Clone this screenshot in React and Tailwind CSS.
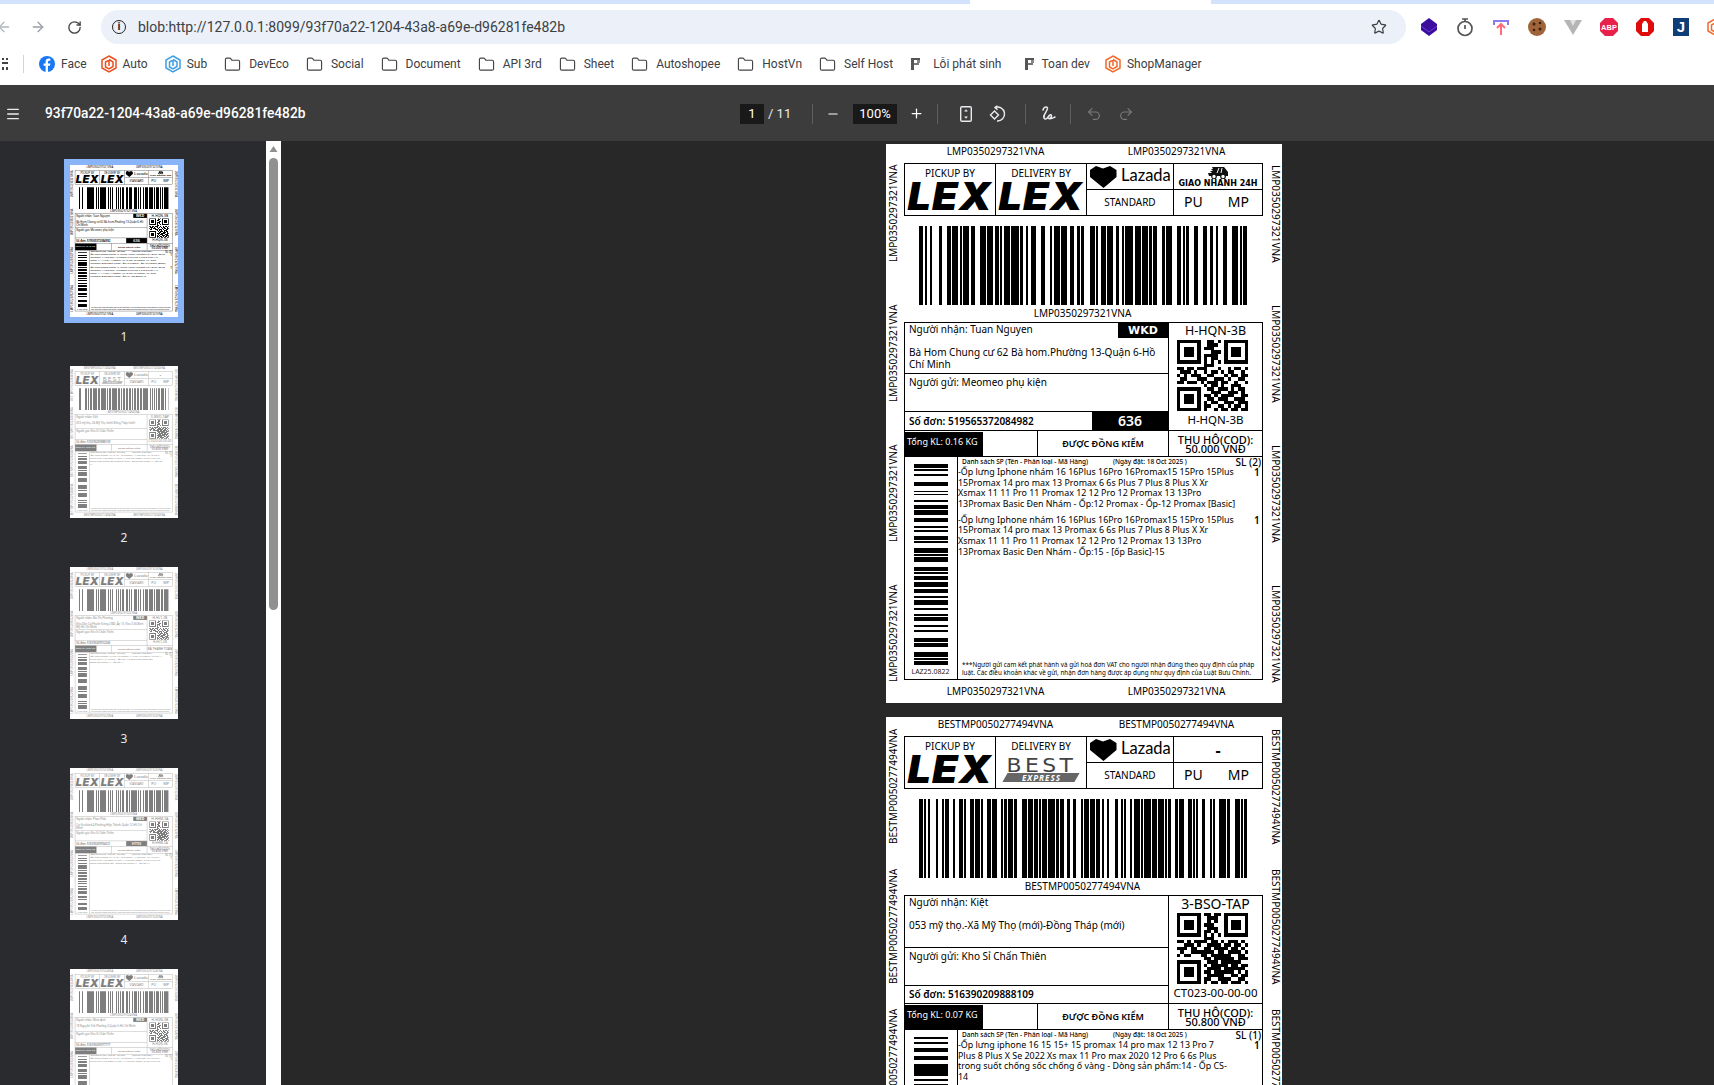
import { ArrowLeft, ArrowRight, RotateCw, Folder, Star, Menu, Minus, Plus, Undo2, Redo2 } from "lucide-react";

const CODE128 = "212222,222122,222221,121223,121322,131222,122213,122312,132212,221213,221312,231212,112232,122132,122231,113222,123122,123221,223211,221132,221231,213212,223112,312131,311222,321122,321221,312212,322112,322211,212123,212321,232121,111323,131123,131321,112313,132113,132311,211313,231113,231311,112133,112331,132131,113123,113321,133121,313121,211331,231131,213113,213311,213131,311123,311321,331121,312113,312311,332111,314111,221411,431111,111224,111422,121124,121421,141122,141221,112214,112412,122114,122411,142112,142211,241211,221114,413111,241112,134111,111242,121142,121241,114212,124112,124211,411212,421112,421211,212141,214121,412121,111143,111341,131141,114113,114311,411113,411311,113141,114131,311141,411131,211412,211214,211232,2331112".split(",");

// letters in set B, long digit runs packed in set C
function encode(value) {
  const codes = [];
  let inC = false;
  for (const run of value.match(/\d{4,}|\D+|\d+/g)) {
    if (/^\d{4,}$/.test(run) && run.length % 2 === 0) {
      codes.push(99);
      for (let i = 0; i < run.length; i += 2) codes.push(Number(run.slice(i, i + 2)));
      inC = true;
    } else {
      if (inC) codes.push(100);
      inC = false;
      for (const c of run) codes.push(c.charCodeAt(0) - 32);
    }
  }
  return codes;
}

function Barcode({ value }) {
  const codes = encode(value);
  const check = codes.reduce((sum, c, i) => sum + c * (i + 1), 104) % 103;
  const widths = [104, ...codes, check, 106].map((c) => CODE128[c]).join("");
  let x = 0;
  const bars = [];
  [...widths].forEach((w, i) => {
    if (i % 2 === 0) bars.push(<rect key={i} x={x} y="0" width={Number(w) + 0.3} height="10" />);
    x += Number(w);
  });
  return (
    <svg width="328" height="79" viewBox={`0 0 ${x} 10`} preserveAspectRatio="none" shapeRendering="crispEdges" fill="#000">
      {bars}
    </svg>
  );
}

const SIDE_A = [[15,27],[31,36],[45,51],[69,81],[96,100],[104,109],[123,129],[138,150],[153,167],[177,189],[201,206],[212,218],[231,243],[246,252],[267,282],[286,290],[294,308],[324,336],[340,345],[350,363],[370,384],[390,402],[411,416],[423,438],[447,453],[465,470],[474,486],[498,504],[513,519],[537,549],[553,565],[579,594],[597,602],[606,618]];
const SIDE_B = [[15,21],[30,36],[48,60],[72,84],[96,132],[141,147],[156,192],[201,207],[216,264],[273,279],[288,336],[348,354],[363,411],[423,429],[438,444],[453,501],[513,519],[528,540],[555,561],[570,618]];

function SideBars({ bars }) {
  return (
    <svg width="34" height="201" viewBox="0 15 102 603" shapeRendering="crispEdges" fill="#000">
      {bars.map(([a, b]) => <rect key={a} x="0" y={a} width="102" height={b - a} />)}
    </svg>
  );
}

const QR_A = ["111111100110101111111","100000100111001000001","101110101110001011101","101110100011101011101","101110101111001011101","100000101011001000001","111111101010101111111","000000001110000000000","110110111000100101101","011101001011010110010","101011100110001011011","011000111001110100110","110111010111011001001","000000001011010011100","111111100110111010110","100000100011100111010","101110101101011110011","101110100110111001110","101110101011001110111","100000101100110101101","111111101001011011011"];
const QR_B = ["111111101101101111111","100000100111001000001","101110100101001011101","101110101110001011101","101110100111001011101","100000101101001000001","111111101010101111111","000000001110000000000","110101111011010111010","001110100111101101101","111011001101111011010","010011111110110111101","101100011011111100110","000000001101111110111","111111100111011111100","100000101011111011011","101110100111101111110","101110101101111110101","101110100111110011011","100000101100111100110","111111101011011011101"];

function Qr({ rows }) {
  return (
    <svg width="71" height="71" viewBox="0 0 21 21" shapeRendering="crispEdges" fill="#000" className="mr-[6px] shrink-0">
      {rows.flatMap((row, y) => [...row].map((c, x) => (c === "1" ? <rect key={`${x}-${y}`} x={x} y={y} width="1" height="1" /> : null)))}
    </svg>
  );
}

function LexLogo() {
  return <div className="font-['Inter'] font-black italic text-[38px] leading-[27px] h-[27px] tracking-[1px] text-black scale-x-[1.09]">LEX</div>;
}

function BestLogo() {
  return (
    <div className="flex flex-col items-center mt-[2px]">
      <div className="font-['DejaVu_Sans'] text-[19px] leading-[14px] tracking-[3px] text-[#444] scale-x-[1.15]">BEST</div>
      <div className="mt-[1px] w-[72px] h-[9px] bg-[#666] -skew-x-[30deg] flex items-center justify-center">
        <span className="skew-x-[30deg] italic font-bold text-[8px] leading-[9px] tracking-[1px] text-white">EXPRESS</span>
      </div>
    </div>
  );
}

function LazadaMark() {
  return (
    <div className="flex items-center gap-[4px] pl-[3px] h-full">
      <svg width="27" height="24" viewBox="0 0 27 24" fill="#000">
        <path d="M0 5 L6 1 L13 3.5 L20 1 L26.5 5 L26.5 12 L13.5 23 L0 12 Z" />
      </svg>
      <span className="font-['Lato'] text-[16.5px] leading-none text-black -mt-[3px]">Lazada</span>
    </div>
  );
}

function TruckIcon() {
  return (
    <svg width="22" height="13" viewBox="0 0 22 13" fill="#111">
      <path d="M5 1 H17 L21 6 V10 H2 L1 7 H5 L3 5 H6 L4 3 H6 Z" />
      <circle cx="7" cy="10.5" r="2.3" fill="#fff" stroke="#111" strokeWidth="1.2" />
      <circle cx="16" cy="10.5" r="2.3" fill="#fff" stroke="#111" strokeWidth="1.2" />
      <path d="M12 2 L10 7 M15 2 L14 7" stroke="#fff" strokeWidth="1" />
    </svg>
  );
}

function SideColumn({ code, rotate }) {
  return (
    <div className={rotate ? "w-[18px] shrink-0 flex flex-col rotate-180 pl-[4px] -mt-[1px]" : "w-[19px] shrink-0 flex flex-col pl-[7px]"}>
      {[0, 1, 2, 3].map((i) => (
        <div key={i} className="h-[140px] shrink-0 flex items-center justify-center text-[10px] leading-[12px] text-black whitespace-nowrap [writing-mode:vertical-rl]">
          {code}
        </div>
      ))}
    </div>
  );
}

function CodeRow({ code, className }) {
  return (
    <div className={`flex pl-[1px] text-[10px] leading-[12px] text-black ${className}`}>
      <div className="w-[181px] shrink-0 text-center">{code}</div>
      <div className="w-[176px] shrink-0 pl-[5px] text-center whitespace-nowrap">{code}</div>
    </div>
  );
}

const NOTE = "***Người gửi cam kết phát hành và gửi hoá đơn VAT cho người nhận đúng theo quy định của pháp\nluật. Các điều khoản khác về gửi, nhận đơn hàng được áp dụng như quy định của Luật Bưu Chính.";

function Label({ p }) {
  return (
    <div className="w-[396px] h-[559px] shrink-0 bg-white flex overflow-hidden font-['Noto_Sans',sans-serif] text-black">
      <SideColumn code={p.code} rotate />
      <div className="w-[359px] shrink-0 flex flex-col">
        <CodeRow code={p.code} className="h-[19px] items-start pt-[1px]" />

        <div className="h-[53px] grid grid-cols-[91px_91px_87px_1fr] border border-black">
          <div className="border-r border-black flex flex-col items-center pt-[3px]">
            <div className="text-[10px] leading-[13px] mb-[3px]">PICKUP BY</div>
            <LexLogo />
          </div>
          <div className="border-r border-black flex flex-col items-center pt-[3px]">
            <div className="text-[10px] leading-[13px] mb-[3px]">DELIVERY BY</div>
            {p.delivery === "best" ? <BestLogo /> : <LexLogo />}
          </div>
          <div className="border-r border-black flex flex-col">
            <div className="h-[26px] border-b border-black"><LazadaMark /></div>
            <div className="flex-1 flex items-center justify-center text-[10px]">STANDARD</div>
          </div>
          <div className="flex flex-col">
            <div className="h-[26px] border-b border-black flex flex-col items-center justify-center">
              {p.fast ? (
                <>
                  <TruckIcon />
                  <div className="font-['DejaVu_Sans'] font-bold text-[8px] leading-[9px] whitespace-nowrap">GIAO NHANH 24H</div>
                </>
              ) : (
                <div className="font-bold text-[16px] leading-none">-</div>
              )}
            </div>
            <div className="flex-1 flex items-center justify-between pl-[10px] pr-[13px] pb-[1px] text-[14px] leading-none">
              <span>PU</span>
              <span>MP</span>
            </div>
          </div>
        </div>

        <div className="h-[106px] flex flex-col items-center pt-[10px] pr-[2px]">
          <Barcode value={p.code} />
          <div className="text-[10px] leading-[16px]">{p.code}</div>
        </div>

        <div className="h-[358px] flex flex-col border border-black">
          <div className="h-[108px] flex border-b border-black">
            <div className="w-[264px] flex flex-col border-r border-black">
              <div className="h-[52px] border-b border-black flex flex-col">
                <div className="flex h-[15px] items-start">
                  <div className="flex-1 pl-[4px] text-[10px] leading-[13px]">Người nhận: {p.name}</div>
                  {p.tag && <div className="w-[50px] h-[15px] bg-black text-white font-['DejaVu_Sans'] font-bold text-[11px] leading-[15px] text-center">{p.tag}</div>}
                </div>
                <div className="pl-[4px] pr-[8px] pt-[8px] text-[10px] leading-[12px]">{p.address}</div>
              </div>
              <div className="h-[38px] border-b border-black pl-[4px] pt-[1px] text-[10px] leading-[15px]">Người gửi: {p.sender}</div>
              <div className="flex-1 flex items-center">
                <div className="flex-1 pl-[4px] font-semibold text-[10px] leading-[17px]">Số đơn: {p.order}</div>
                {p.num && <div className="w-[76px] h-full bg-black text-white font-semibold text-[14px] leading-[18px] text-center">{p.num}</div>}
              </div>
            </div>
            <div className="flex-1 flex flex-col items-center">
              <div className={`h-[17px] leading-[16px] whitespace-nowrap ${p.wideSort ? "text-[14px]" : "text-[12.5px]"}`}>{p.sort}</div>
              <Qr rows={p.qr} />
              <div className="text-[11.5px] leading-[18px] whitespace-nowrap">{p.sort2}</div>
            </div>
          </div>

          <div className="h-[26px] flex border-b border-black">
            <div className="w-[133px] border-r border-black pt-[1px]">
              <div className="w-[78px] h-[24px] bg-black text-white text-[9px] leading-[19px] pl-[2px] whitespace-nowrap">Tổng KL: {p.weight} KG</div>
            </div>
            <div className="w-[131px] border-r border-black flex items-center justify-center font-semibold text-[9px] whitespace-nowrap">ĐƯỢC ĐỒNG KIỂM</div>
            <div className="flex-1 flex flex-col items-center justify-center font-medium text-[11px] leading-[9px] whitespace-nowrap">
              {p.cod ? (
                <>
                  <div>THU HỘ(COD):</div>
                  <div>{p.cod} VNĐ</div>
                </>
              ) : (
                <div>ĐÃ THANH TOÁN</div>
              )}
            </div>
          </div>

          <div className="flex-1 flex min-h-0">
            <div className="w-[53px] shrink-0 border-r border-black flex flex-col items-center pt-[7px] pr-[1px]">
              <SideBars bars={p.side} />
              <div className="text-[7px] leading-[13px] text-[#222]">LAZ25.0822</div>
            </div>
            <div className="flex-1 flex flex-col min-w-0 pb-[2px]">
              <div className="flex h-[10px] items-center pl-[4px] pr-[1px]">
                <span className="w-[151px] font-medium text-[6.5px] whitespace-nowrap">Danh sách SP (Tên - Phân loại - Mã Hàng)</span>
                <span className="flex-1 font-medium text-[6.5px] whitespace-nowrap">(Ngày đặt: 18 Oct 2025 )</span>
                <span className="font-medium text-[10px] whitespace-nowrap">SL ({p.items.length})</span>
              </div>
              {p.items.map((item, i) => (
                <div key={i} className={`flex text-[8.9px] leading-[10.67px] ${i > 0 ? "mt-[5px]" : ""}`}>
                  <div className="flex-1 min-w-0 whitespace-pre">{item}</div>
                  <div className="w-[8px] font-semibold text-[10px]">1</div>
                </div>
              ))}
              <div className="mt-auto pl-[4px] text-[6.3px] leading-[8px] whitespace-pre">{NOTE}</div>
            </div>
          </div>
        </div>

        <CodeRow code={p.code} className="h-[23px] items-center pb-[2px]" />
      </div>
      <SideColumn code={p.code} />
    </div>
  );
}

const BASIC = "-Ốp lưng Iphone nhám 16 16Plus 16Pro 16Promax15 15Pro 15Plus\n15Promax 14 pro max 13 Promax 6 6s Plus 7 Plus 8 Plus X Xr\nXsmax 11 11 Pro 11 Promax 12 12 Pro 12 Promax 13 13Pro\n";

const PAGES = [
  { code: "LMP0350297321VNA", delivery: "lex", fast: true, name: "Tuan Nguyen", tag: "WKD", address: "Bà Hom Chung cư 62 Bà hom.Phường 13-Quận 6-Hồ Chí Minh", sender: "Meomeo phụ kiện", sort: "H-HQN-3B", sort2: "H-HQN-3B", order: "519565372084982", num: "636", weight: "0.16", cod: "50.000", qr: QR_A, side: SIDE_A, items: [BASIC + "13Promax Basic Đen Nhám - Ốp:12 Promax - Ốp-12 Promax [Basic]", BASIC + "13Promax Basic Đen Nhám - Ốp:15 - [ốp Basic]-15"] },
  { code: "BESTMP0050277494VNA", delivery: "best", fast: false, name: "Kiệt", address: "053 mỹ thọ.-Xã Mỹ Thọ (mới)-Đồng Tháp (mới)", sender: "Kho Sỉ Chấn Thiên", sort: "3-BSO-TAP", wideSort: true, sort2: "CT023-00-00-00", order: "516390209888109", weight: "0.07", cod: "50.800", qr: QR_B, side: SIDE_B, items: ["-Ốp lưng iphone 16 15 15+ 15 promax 14 pro max 12 13 Pro 7\nPlus 8 Plus X Se 2022 Xs max 11 Pro max 2020 12 Pro 6 6s Plus\ntrong suốt chống sốc chống ố vàng - Dòng sản phẩm:14 - Ốp CS-\n14"] },
  { code: "LMP0350297322VNA", delivery: "lex", fast: true, name: "Bùi Thị Phương", tag: "WKD", address: "Khu Dân Cư Phước Kiểng 2380, Ấp 13, Khu 3-Xã Bình Mỹ-Hồ Chí Minh", sender: "Kho Sỉ Chấn Thiên", sort: "H-HLT-2B", sort2: "H-HLT-2B", order: "516390209912345", weight: "0.07", qr: QR_A, side: SIDE_B, items: ["-Ốp lưng iphone 16 Pro 15 Promax 14 Plus 13 Promax 12 Pro 11\nPlus 8 Plus X Xr Xs max - Ốp CS-14 trong suốt chống sốc\nDòng sản phẩm:14 - Ốp CS-14"] },
  { code: "LMP0350297323VNA", delivery: "lex", fast: true, name: "Phan Phát", tag: "WKD", address: "Cty Scotland 4 Phường Hiệp Thành-Quận 12-Hồ Chí Minh", sender: "Kho Sỉ Chấn Thiên", sort: "H-HHM-3A", sort2: "H-HHM-3A", order: "516390209954321", num: "HT53", weight: "0.07", cod: "50.800", qr: QR_B, side: SIDE_A, items: ["-Ốp lưng iphone 16 15 15+ 15 promax 14 pro max 12 13 Pro 7\nPlus 8 Plus X Se 2022 Xs max 11 Pro max 2020 12 Pro 6 6s Plus\ntrong suốt chống sốc - Dòng sản phẩm:14 - Ốp CS-14"] },
  { code: "LMP0350297324VNA", delivery: "lex", fast: true, name: "Minh Anh", tag: "WKD", address: "18 Nguyễn Trãi Phường 3-Quận 5-Hồ Chí Minh", sender: "Kho Sỉ Chấn Thiên", sort: "H-HQN-3B", sort2: "H-HQN-3B", order: "516390209977777", weight: "0.07", cod: "50.800", qr: QR_A, side: SIDE_B, items: ["-Ốp lưng iphone 16 15 15+ 15 promax 14 pro max 12 13 Pro 7\nPlus 8 Plus X Se 2022 Xs max 11 Pro max 2020 12 Pro 6 6s Plus"] },
];

function Thumb({ page, n, active }) {
  return (
    <div className="h-[201px] shrink-0 flex flex-col items-center">
      <div className={`w-[108px] h-[152px] bg-white overflow-hidden ${active ? "ring-[6px] ring-[#8ab4f8]" : ""}`}>
        <div className={`origin-top-left scale-[0.2727] ${active ? "" : "opacity-50"}`}>
          <Label p={page} />
        </div>
      </div>
      <div className="mt-[11px] text-[12px] leading-[18px] text-[#e8eaed]">{n}</div>
    </div>
  );
}

function HexLogo({ color }) {
  return (
    <svg width="16" height="18" viewBox="0 0 16 18" fill="none" stroke={color} strokeWidth="1.5">
      <path d="M8 1 L15 5 V13 L8 17 L1 13 V5 Z" />
      <path d="M8 4.5 L12 7 V11.5 L8 14 L4.5 12 V7 L8 5 V11" />
    </svg>
  );
}

function FacebookLogo() {
  return (
    <svg width="16" height="16" viewBox="0 0 16 16">
      <circle cx="8" cy="8" r="8" fill="#1877f2" />
      <path d="M9 16 V9.8 H11 L11.4 7.4 H9 V6 C9 5.2 9.4 4.8 10.2 4.8 H11.4 V2.8 C10.9 2.7 10.3 2.6 9.8 2.6 C7.8 2.6 6.6 3.8 6.6 5.8 V7.4 H4.6 V9.8 H6.6 V16 Z" fill="#fff" />
    </svg>
  );
}

function PinIcon() {
  return (
    <svg width="10" height="14" viewBox="0 0 10 14" fill="#555" shapeRendering="crispEdges">
      <rect x="0" y="1" width="3" height="12" />
      <rect x="3" y="1" width="6" height="2" />
      <rect x="6" y="3" width="3" height="3" fill="#888" />
      <rect x="3" y="6" width="5" height="2" fill="#777" />
    </svg>
  );
}

const BOOKMARKS = [
  { label: "Face", icon: <FacebookLogo /> },
  { label: "Auto", icon: <HexLogo color="#e8501f" />, nudge: "-ml-[3px]" },
  { label: "Sub", icon: <HexLogo color="#3f9fe0" /> },
  { label: "DevEco" }, { label: "Social" }, { label: "Document" }, { label: "API 3rd" },
  { label: "Sheet" }, { label: "Autoshopee" }, { label: "HostVn" }, { label: "Self Host" },
  { label: "Lỗi phát sinh", icon: <PinIcon />, wide: true, nudge: "ml-[1px]" },
  { label: "Toan dev", icon: <PinIcon />, nudge: "ml-[7px]" },
  { label: "ShopManager", icon: <HexLogo color="#f26a2a" />, nudge: "-ml-[2px]" },
];

function BookmarkBar() {
  return (
    <div className="h-[32px] mb-[5px] flex items-center shrink-0 overflow-hidden text-[12px] text-[#3c4043] font-['Roboto',sans-serif]">
      <svg width="8" height="14" viewBox="0 0 8 14" fill="#444" className="ml-[2px] shrink-0" shapeRendering="crispEdges">
        <path d="M0 1 H2 V3 H0 Z M4 1 H6 V3 H4 Z M0 5 H6 V7 H0 Z M0 10 H2 V13 H0 Z M4 10 H6 V13 H4 Z" />
      </svg>
      <div className="w-px h-[18px] bg-[#c6d4ec] ml-[13px] mr-[15px] shrink-0" />
      <div className="flex items-center gap-[17px]">
        {BOOKMARKS.map((b) => (
          <div key={b.label} className={`flex items-center whitespace-nowrap ${b.icon ? (b.wide ? "gap-[12px]" : "gap-[6px]") : "gap-[8px]"} ${b.nudge || ""}`}>
            {b.icon || <Folder size={17} strokeWidth={1.6} className="text-[#444]" />}
            <span>{b.label}</span>
          </div>
        ))}
      </div>
    </div>
  );
}

function Extensions() {
  return (
    <div className="flex items-center gap-[16px] ml-[13px] shrink-0">
      <svg width="20" height="20" viewBox="0 0 20 20"><path d="M10 1 L18 7 L18 13 L10 19 L2 13 L2 7 Z" fill="#3b0d9e" /><path d="M2 9 L10 15 L18 9" stroke="#6a3fd0" fill="none" /></svg>
      <svg width="20" height="20" viewBox="0 0 20 20" fill="none" stroke="#555" strokeWidth="1.7"><circle cx="10" cy="11.5" r="7" /><path d="M7 2 H13 M10 2 V5 M10 8 V12" /></svg>
      <svg width="20" height="20" viewBox="0 0 20 20" fill="none" strokeWidth="2"><path d="M3 8 V4 H17 V8" stroke="#8a7cf0" /><path d="M10 18 V8 M6 11 L10 7 L14 11" stroke="#ff6b78" /></svg>
      <svg width="20" height="20" viewBox="0 0 20 20"><circle cx="10" cy="10" r="9" fill="#a0643a" /><circle cx="7" cy="7" r="1.5" fill="#3a2010" /><circle cx="13" cy="6" r="1.3" fill="#3a2010" /><circle cx="13" cy="12" r="1.5" fill="#3a2010" /><circle cx="7" cy="13" r="1.3" fill="#3a2010" /></svg>
      <svg width="20" height="20" viewBox="0 0 20 20"><path d="M1 3 H19 L10 18 Z" fill="#b5b5b5" /><path d="M7 3 H13 L10 9 Z" fill="#e2e2e2" /></svg>
      <svg width="20" height="20" viewBox="0 0 20 20">
        <path d="M6 1 H14 L19 6 V14 L14 19 H6 L1 14 V6 Z" fill="#e8214b" />
        <text x="10" y="13" textAnchor="middle" fontSize="7.5" fontWeight="700" fontFamily="Liberation Sans" fill="#fff">ABP</text>
      </svg>
      <svg width="20" height="20" viewBox="0 0 20 20">
        <path d="M6 1 H14 L19 6 V14 L14 19 H6 L1 14 V6 Z" fill="#e00b0b" />
        <path d="M7 15 V7 L9 4 H11 L13 7 V15 Z" fill="#fff" />
      </svg>
      <svg width="20" height="20" viewBox="0 0 20 20">
        <rect x="2" y="1" width="16" height="18" fill="#0d3e78" />
        <text x="10" y="15" textAnchor="middle" fontSize="15" fontWeight="700" fontFamily="Liberation Sans" fill="#fff">J</text>
      </svg>
      <HexLogo color="#f26a2a" />
    </div>
  );
}

function ToolDivider({ className }) {
  return <div className={`w-px h-[20px] bg-[#5f5f5f] shrink-0 ${className}`} />;
}

function PdfToolbar() {
  return (
    <div className="h-[56px] pt-[1px] bg-[#3c3c3c] flex items-center shrink-0 text-white font-['Roboto',sans-serif] overflow-hidden">
      <Menu size={16} strokeWidth={2} className="ml-[5px] text-[#e8eaed] shrink-0" />
      <div className="ml-[24px] w-[695px] shrink-0 font-medium text-[13.75px] whitespace-nowrap">93f70a22-1204-43a8-a69e-d96281fe482b</div>
      <div className="w-[24px] h-[20px] bg-[#191919] text-center text-[13px] leading-[20px] shrink-0">1</div>
      <div className="ml-[4px] w-[24px] text-[13px] text-[#e8eaed] shrink-0 whitespace-nowrap">/ 11</div>
      <ToolDivider className="ml-[20px]" />
      <Minus size={14} strokeWidth={2} className="ml-[13px] shrink-0" />
      <div className="ml-[13px] w-[44px] h-[20px] bg-[#191919] text-center text-[13px] leading-[20px] shrink-0">100%</div>
      <Plus size={15} strokeWidth={2} className="ml-[12px] shrink-0" />
      <ToolDivider className="ml-[13px]" />
      <svg width="14" height="18" viewBox="0 0 14 18" fill="none" stroke="#e8eaed" strokeWidth="1.4" className="ml-[21px] shrink-0">
        <rect x="1.7" y="1.7" width="10.6" height="14.6" rx="1.3" />
        <path d="M7 4.6 L5.6 6.3 H8.4 Z M7 13.4 L5.6 11.7 H8.4 Z" fill="#e8eaed" strokeWidth="0.5" />
      </svg>
      <svg width="18" height="18" viewBox="0 0 18 18" fill="none" stroke="#e8eaed" strokeWidth="1.4" className="ml-[16px] shrink-0">
        <path d="M6 2.5 A7 7 0 1 1 8 16" />
        <path d="M8.5 0.7 L6 2.5 L8.5 4.6" />
        <path d="M5.5 6 L9.5 10 L5.5 14 L1.5 10 Z" />
      </svg>
      <ToolDivider className="ml-[18px]" />
      <svg width="16" height="18" viewBox="0 0 16 18" fill="none" stroke="#e8eaed" strokeWidth="1.5" className="ml-[14px] shrink-0" strokeLinecap="round">
        <path d="M3 5 C4 1 9 1 7 5 C5 9 2 12 5 14 C7 15 8 11 10 10 C13 9 11 15 8 13 C10 15 13 13 15 12" />
      </svg>
      <ToolDivider className="ml-[14px]" />
      <Undo2 size={16} strokeWidth={1.7} className="ml-[15px] text-[#7a7a7a] shrink-0" />
      <Redo2 size={16} strokeWidth={1.7} className="ml-[16px] text-[#7a7a7a] shrink-0" />
    </div>
  );
}

export default function App() {
  return (
    <div className="h-screen flex flex-col overflow-hidden bg-white">
      <div className="h-[4px] flex shrink-0 bg-[#d3e3fd]">
        <div className="w-[970px]" />
        <div className="w-[241px] bg-white" />
      </div>

      <div className="h-[44px] flex items-center shrink-0 pt-[6px] pb-[4px] overflow-hidden">
        <ArrowLeft size={16} className="-ml-[4px] text-[#b3b7bb] shrink-0" />
        <ArrowRight size={16} className="ml-[18px] text-[#9aa0a6] shrink-0" />
        <RotateCw size={15} strokeWidth={2.2} className="ml-[21px] text-[#45474a] shrink-0" />
        <div className="ml-[19px] w-[1305px] h-[34px] shrink-0 rounded-full bg-[#ebf0f9] flex items-center pl-[10px] pr-[19px]">
          <div className="w-[14px] h-[14px] ml-[1px] rounded-full border-[1.5px] border-[#222] text-[10px] leading-[11px] text-center font-bold text-[#222] shrink-0">i</div>
          <div className="ml-[12px] flex-1 text-[14px] text-[#3c4043] font-['Roboto',sans-serif] whitespace-nowrap">blob:http://127.0.0.1:8099/93f70a22-1204-43a8-a69e-d96281fe482b</div>
          <Star size={16} strokeWidth={1.8} className="text-[#3c4043] shrink-0" />
        </div>
        <Extensions />
      </div>

      <BookmarkBar />
      <PdfToolbar />

      <div className="flex-1 flex min-h-0">
        <div className="w-[266px] shrink-0 bg-[#2a2b2e] overflow-hidden">
          <div className="w-[248px] flex flex-col items-center pt-[24px]">
            {PAGES.map((page, i) => <Thumb key={page.code} page={page} n={i + 1} active={i === 0} />)}
          </div>
        </div>
        <div className="w-[15px] shrink-0 bg-white flex flex-col items-center pt-[4px] gap-[5px]">
          <svg width="9" height="8" viewBox="0 0 9 8" fill="#909090"><path d="M4.5 1 L8.5 7 H0.5 Z" /></svg>
          <div className="w-[9px] h-[452px] rounded-full bg-[#909090]" />
        </div>
        <div className="flex-1 min-w-0 bg-[#282828] flex flex-col gap-[14px] pl-[605px] pt-[3px] overflow-hidden">
          <Label p={PAGES[0]} />
          <Label p={PAGES[1]} />
        </div>
      </div>
    </div>
  );
}
